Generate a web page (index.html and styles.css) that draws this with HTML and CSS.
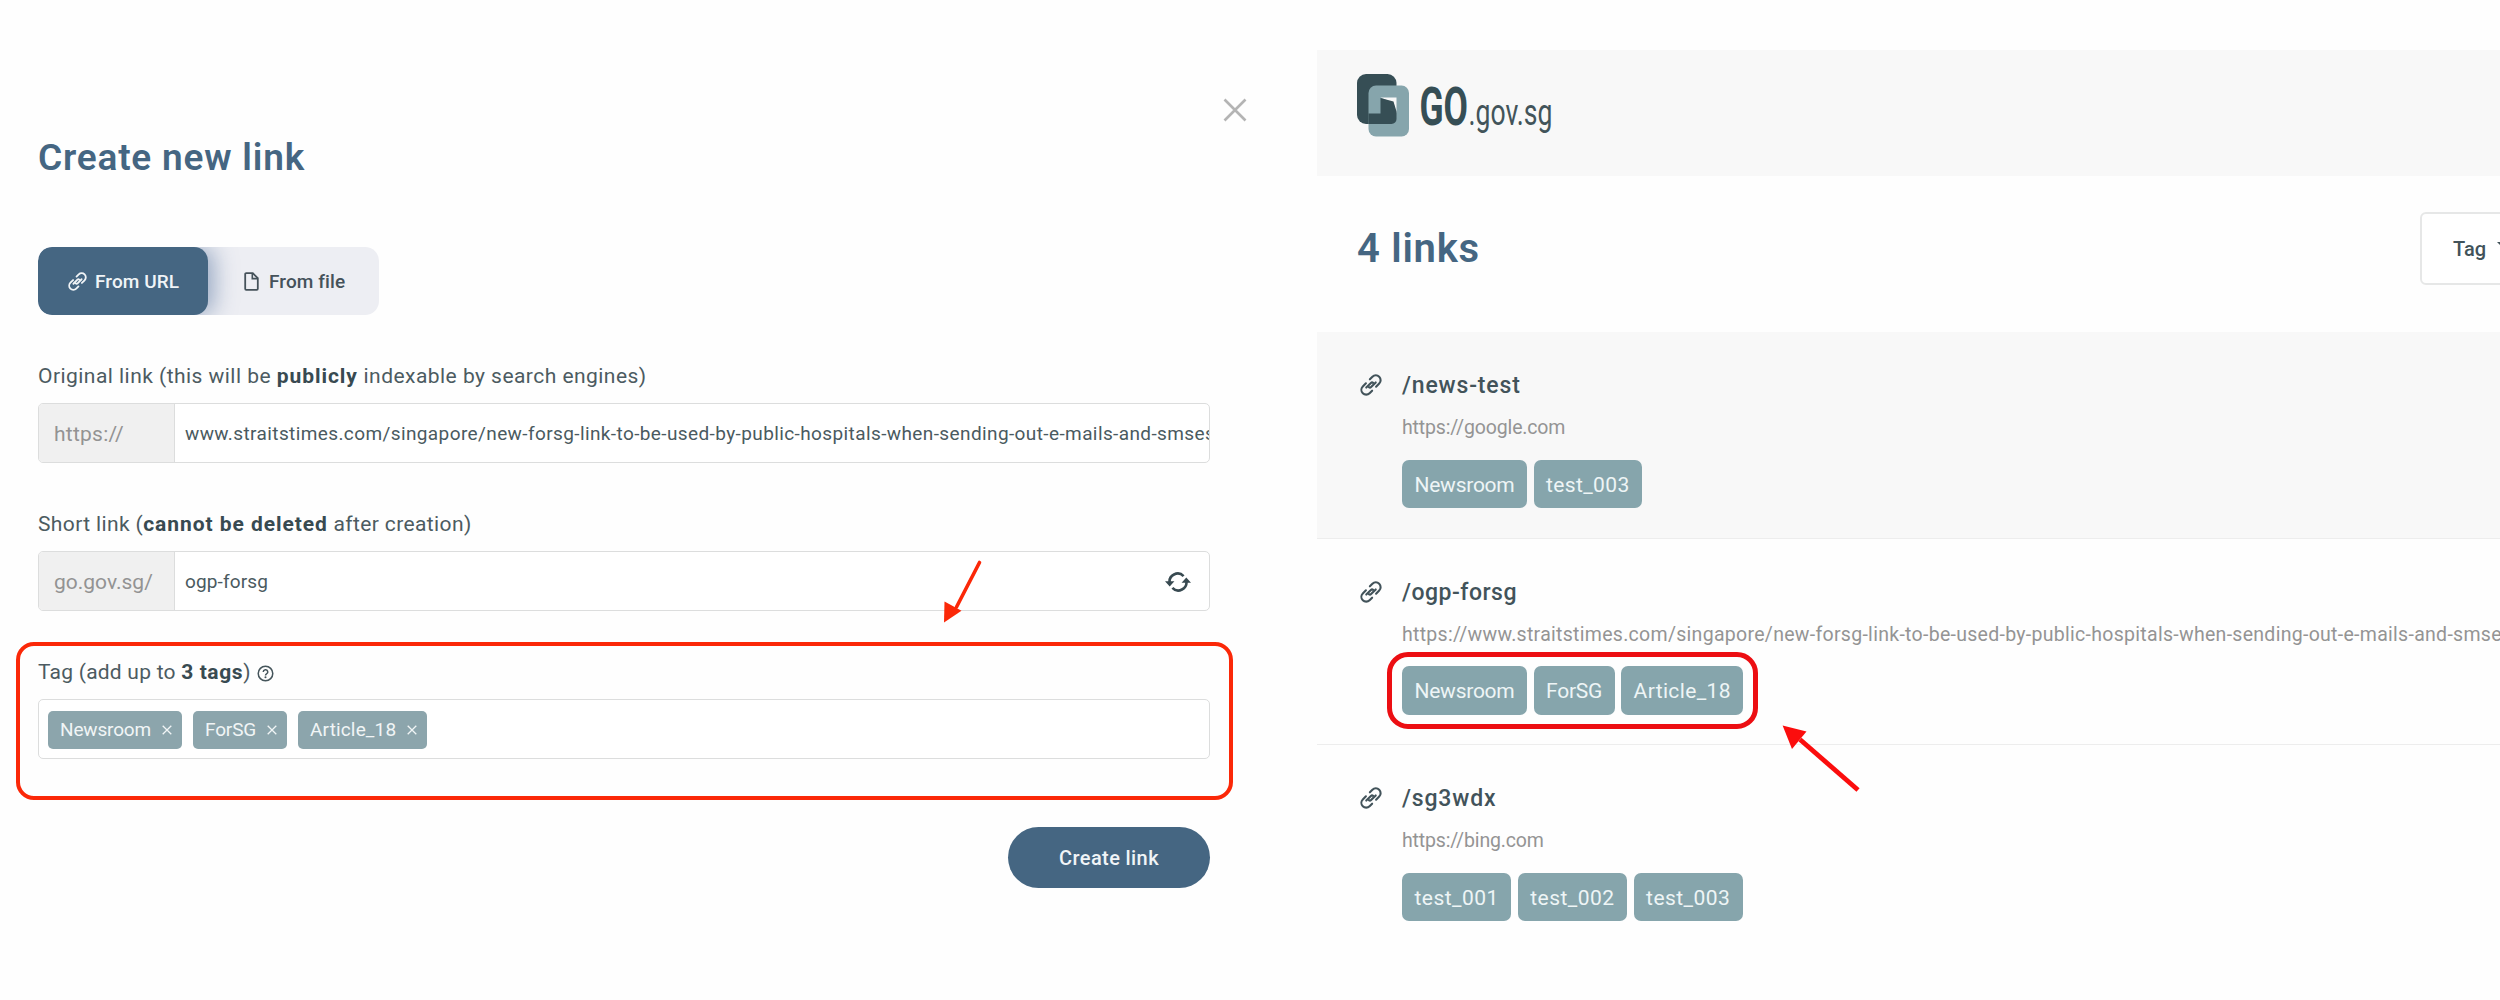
FILE: index.html
```
<!DOCTYPE html>
<html lang="en">
<head>
<meta charset="utf-8">
<title>GO.gov.sg</title>
<link rel="stylesheet" href="styles.css">
</head>
<body>
<svg class="defs" width="0" height="0">
  <symbol id="link" viewBox="0 0 22 22">
    <g fill="none" stroke="currentColor" stroke-width="2.1" stroke-linecap="round" stroke-linejoin="round" transform="rotate(-45 11 11)">
      <path d="M8.6 6.2H4.2a4.8 4.8 0 0 0 0 9.6H7.800"/>
      <path d="M13.400 15.800h4.400a4.800 4.800 0 0 0 0-9.600h-3.600"/>
      <path d="M5.800 9.500H12.400a1.600 1.600 0 0 1 1.600 1.500"/>
      <path d="M16.200 12.500H9.600a1.600 1.600 0 0 1-1.600-1.500"/>
    </g>
  </symbol>
</svg>
<main class="page">
  <section class="create">
    <svg class="close" viewBox="0 0 24 24"><path d="M1.500 1.500 22.500 22.500M22.500 1.500 1.500 22.500" stroke="#b4b4b4" stroke-width="2.600" fill="none"/></svg>
    <h1 class="title">Create new link</h1>
    <div class="toggle">
      <button class="toggle-item active"><svg class="toggle-link"><use href="#link"/></svg>From URL</button>
      <button class="toggle-item plain"><svg class="file" viewBox="0 0 15 19"><path d="M1.200 2.200a1 1 0 0 1 1-1h6.600l5 5v10.600a1 1 0 0 1-1 1H2.200a1 1 0 0 1-1-1z" fill="none" stroke="currentColor" stroke-width="1.800"/><path d="M8.300 1v5.600h5.600" fill="none" stroke="currentColor" stroke-width="1.600"/></svg>From file</button>
    </div>

    <div class="field">
      <div class="label">Original link (this will be <b>publicly</b> indexable by search engines)</div>
      <div class="input">
        <span class="prefix">https://</span>
        <span class="value">www.straitstimes.com/singapore/new-forsg-link-to-be-used-by-public-hospitals-when-sending-out-e-mails-and-smses</span>
      </div>
    </div>

    <div class="field">
      <div class="label short">Short link (<b>cannot be deleted</b> after creation)</div>
      <div class="input">
        <span class="prefix tight">go.gov.sg/</span>
        <span class="value brief">ogp-forsg</span>
        <svg class="refresh" viewBox="0 0 26 20"><g fill="none" stroke="#384a51" stroke-width="2.600"><path d="M4.700 11.200A8.100 8.100 0 0 1 18.600 4.200"/><path d="M21.300 8.800A8.100 8.100 0 0 1 7.400 15.800"/></g><path d="M0 9.200h9.400l-4.700 5.200zM16.600 10.800H26l-4.700-5.200z" fill="#384a51"/></svg>
      </div>
    </div>

    <div class="field">
      <div class="label tagline">Tag (add up to <b>3 tags</b>) <svg class="help" viewBox="0 0 18 18"><circle cx="9" cy="9" r="7.700" fill="none" stroke="#45555b" stroke-width="1.600"/><path d="M6.600 7.300a2.400 2.300 0 1 1 3.500 2.100Q9 10 9 11" fill="none" stroke="#45555b" stroke-width="1.600"/><circle cx="9" cy="13" r="1.100" fill="#45555b"/></svg></div>
      <div class="input chips">
        <span class="chip">Newsroom<svg viewBox="0 0 10 10"><path d="M.7.700 9.300 9.300M9.300.7.700 9.300"/></svg></span>
        <span class="chip">ForSG<svg viewBox="0 0 10 10"><path d="M.7.700 9.300 9.300M9.300.7.700 9.300"/></svg></span>
        <span class="chip wide">Article_18<svg viewBox="0 0 10 10"><path d="M.7.700 9.300 9.300M9.300.7.700 9.300"/></svg></span>
      </div>
    </div>
    <button class="submit">Create link</button>

    <div class="mark-form"></div>
    <svg class="arrow-form" viewBox="0 0 44 68"><path d="M37.500 4.500 14.500 49" stroke="#fb2808" stroke-width="3.600" stroke-linecap="round"/><path d="M2 64.500 2.500 43.500 19.500 52.700z" fill="#fb2808"/></svg>
  </section>

  <section class="links">
    <header class="brand">
      <svg class="logo" viewBox="0 0 200 70">
        <rect x="0" y="0" width="39.500" height="50" rx="9" fill="#364e55"/>
        <rect x="11.500" y="11.500" width="40.500" height="51" rx="7.500" fill="#86a5ac"/>
        <path d="M23.500 23.500H39.500V39.500L36.500 29z" fill="#f8f8f8"/>
        <path d="M11.500 39.500H23.500V24l13 3.500 3 10V45a5 5 0 0 1-5 5H11.500z" fill="#364e55"/>
        <text x="62.500" y="51" class="go" textLength="48.500" lengthAdjust="spacingAndGlyphs">GO</text>
        <text x="111.500" y="51" class="gov" textLength="84" lengthAdjust="spacingAndGlyphs">.gov.sg</text>
      </svg>
    </header>
    <div class="bar">
      <h2 class="count">4 links</h2>
      <button class="filter">Tag<span class="caret"></span></button>
    </div>
    <article class="row shaded">
      <svg class="row-icon"><use href="#link"/></svg>
      <div class="info">
        <h3 class="slug">/news-test</h3>
        <p class="url">https://google.com</p>
        <div class="tags"><span class="tag">Newsroom</span><span class="tag wide">test_003</span></div>
      </div>
    </article>
    <article class="row">
      <svg class="row-icon"><use href="#link"/></svg>
      <div class="info">
        <h3 class="slug ogp">/ogp-forsg</h3>
        <p class="url long">https://www.straitstimes.com/singapore/new-forsg-link-to-be-used-by-public-hospitals-when-sending-out-e-mails-and-smses</p>
        <div class="tags"><span class="tag">Newsroom</span><span class="tag">ForSG</span><span class="tag wide">Article_18</span>
          <div class="mark-tags"></div>
        </div>
      </div>
      <svg class="arrow-tags" viewBox="0 0 84 74"><path d="M78 68 20 17.500" stroke="#fb0d0d" stroke-width="4.800"/><path d="M2.600 3.500 26.500 9.500 12 27z" fill="#fb0d0d"/></svg>
    </article>
    <article class="row last">
      <svg class="row-icon"><use href="#link"/></svg>
      <div class="info">
        <h3 class="slug">/sg3wdx</h3>
        <p class="url">https://bing.com</p>
        <div class="tags"><span class="tag wide">test_001</span><span class="tag wide">test_002</span><span class="tag wide">test_003</span></div>
      </div>
    </article>
  </section>
</main>
</body>
</html>
```
FILE: styles.css
```
* { box-sizing: border-box; }
body {
  margin: 0;
  background: #fefefe;
  color: #42535a;
  font-family: Roboto, "Liberation Sans", sans-serif;
}
h1, h2, h3, p { margin: 0; }
button { font: inherit; border: 0; padding: 0; color: inherit; }
.defs { display: block; position: absolute; }

.page { display: flex; width: 2500px; height: 1000px; overflow: hidden; }

/* Create form */
.create {
  position: relative;
  width: 1317px;
  padding: 134px 107px 0 38px;
  display: flex;
  flex-direction: column;
}
.close { position: absolute; left: 1223px; top: 98px; width: 24px; height: 24px; }
.title {
  font-size: 37px;
  line-height: 48px;
  font-weight: 600;
  letter-spacing: .8px;
  color: #456682;
}

.toggle {
  display: flex;
  width: 341px;
  height: 68px;
  margin-top: 65px;
  border-radius: 14px;
  background: #edeef3;
  overflow: hidden;
}
.toggle-item {
  display: flex;
  align-items: center;
  font-size: 19px;
  font-weight: 500;
  letter-spacing: .1px;
}
.active {
  width: 170px;
  padding-left: 30px;
  gap: 8px;
  border-radius: 14px;
  background: #456682;
  color: #f0f4f7;
  box-shadow: 6px 0 22px rgba(69, 102, 150, .5);
}
.plain { flex: 1; padding-left: 36px; gap: 10px; background: none; color: #45525a; }
.toggle-link { width: 19px; height: 19px; }
.file { width: 15px; height: 19px; }

.field { margin-top: 48px; }
.label { font-size: 21px; line-height: 26px; padding-bottom: 2px; letter-spacing: .46px; white-space: nowrap; color: #4c5b61; }
.label b { letter-spacing: .95px; color: #384a51; }
.label.short { letter-spacing: .38px; }
.label.tagline { letter-spacing: .23px; }
.label.tagline b { letter-spacing: .6px; }
.help { width: 17px; height: 17px; margin-left: 1px; vertical-align: -2.500px; }

.input {
  display: flex;
  align-items: stretch;
  height: 60px;
  margin-top: 12px;
  border: 1.500px solid #dcdddd;
  border-radius: 5px;
  background: #fff;
  overflow: hidden;
  line-height: 60px;
}
.prefix {
  width: 136px;
  flex: none;
  padding-left: 15px;
  border-right: 1px solid #dcdddd;
  background: #f0f0f0;
  color: #939393;
  font-size: 21px;
  letter-spacing: .24px;
}
.prefix.tight { letter-spacing: 0; }
.value {
  flex: 1;
  min-width: 0;
  padding-left: 10px;
  font-size: 19px;
  letter-spacing: .394px;
  white-space: nowrap;
  overflow: hidden;
  color: #4a5a60;
}
.brief { letter-spacing: .13px; }
.refresh { width: 26px; height: 20px; margin: 20px 18px 0 0; }

.chips { align-items: center; gap: 11px; padding: 2px 0 0 9px; }
.chip {
  display: flex;
  align-items: center;
  gap: 11px;
  height: 38px;
  padding: 0 10px 0 12px;
  border-radius: 5px;
  background: #8ca5ac;
  color: #f1f5f6;
  font-size: 19px;
  letter-spacing: -.16px;
}
.chip.wide { letter-spacing: .15px; }
.chip svg { width: 10px; height: 10px; fill: none; stroke: #f1f5f6; stroke-width: 1.300; }

.submit {
  align-self: flex-end;
  width: 202px;
  height: 61px;
  margin-top: 68px;
  border-radius: 31px;
  background: #456682;
  color: #f0f4f7;
  font-size: 20px;
  font-weight: 500;
  letter-spacing: .4px;
}

/* Highlights drawn over the form */
.mark-form {
  position: absolute;
  left: 16px;
  top: 642px;
  width: 1217px;
  height: 158px;
  border: 4px solid #fb2808;
  border-radius: 18px;
}
.arrow-form { position: absolute; left: 941.500px; top: 558px; width: 44px; height: 68px; }

/* Link list */
.links { flex: 1; min-width: 0; padding-top: 50px; overflow: hidden; }
.brand { height: 126px; padding: 24px 0 0 40px; background: #f8f8f8; }
.logo { display: block; width: 200px; height: 70px; }
.go { font-size: 54px; font-weight: 700; fill: #364e55; }
.gov { font-size: 37px; fill: #42545a; }
.bar {
  display: flex;
  align-items: center;
  justify-content: space-between;
  height: 156px;
  padding: 0 0 12px 40px;
}
.count { font-size: 40px; font-weight: 600; letter-spacing: .75px; color: #456682; }
.filter {
  display: flex;
  align-items: center;
  flex: none;
  gap: 11px;
  width: 170px;
  height: 73px;
  margin-right: -90px;
  padding: 2px 0 0 31px;
  border: 2px solid #e6e7e7;
  border-radius: 6px;
  background: #fff;
  font-size: 20px;
  font-weight: 500;
}
.caret { margin-top: -8px; border: 6px solid transparent; border-top-color: #42535a; border-bottom: 0; }

.row {
  position: relative;
  display: flex;
  height: 206.500px;
  padding: 39px 0 0 43px;
  border-bottom: 1.500px solid #ededed;
}
.shaded { background: #f8f8f8; }
.last { border-bottom: 0; }
.row-icon { flex: none; width: 22px; height: 22px; margin: 3px 20px 0 0; color: #42535a; }
.slug { font-size: 23px; line-height: 30px; font-weight: 500; letter-spacing: .84px; }
.slug.ogp { letter-spacing: .5px; }
.url {
  margin-top: 14px;
  font-size: 19.500px;
  line-height: 26px;
  letter-spacing: -.15px;
  white-space: nowrap;
  color: #949494;
}
.url.long { letter-spacing: .29px; }
.tags { position: relative; display: flex; gap: 6.500px; width: max-content; margin-top: 18.500px; }
.tag {
  height: 48.500px;
  padding: 0 12.500px;
  border-radius: 7px;
  background: #86a5ac;
  color: #eef5f6;
  font-size: 21px;
  line-height: 50px;
  letter-spacing: -.25px;
}
.tag.wide { letter-spacing: .38px; }
.row .tag.wide:first-child, .last .tag.wide { letter-spacing: .46px; }
.mark-tags {
  position: absolute;
  left: -15px;
  top: -14px;
  width: 371px;
  height: 77px;
  border: 5px solid #ec0e12;
  border-radius: 21px;
}
.arrow-tags { position: absolute; left: 463px; top: 183.500px; width: 84px; height: 74px; z-index: 1; }
```
